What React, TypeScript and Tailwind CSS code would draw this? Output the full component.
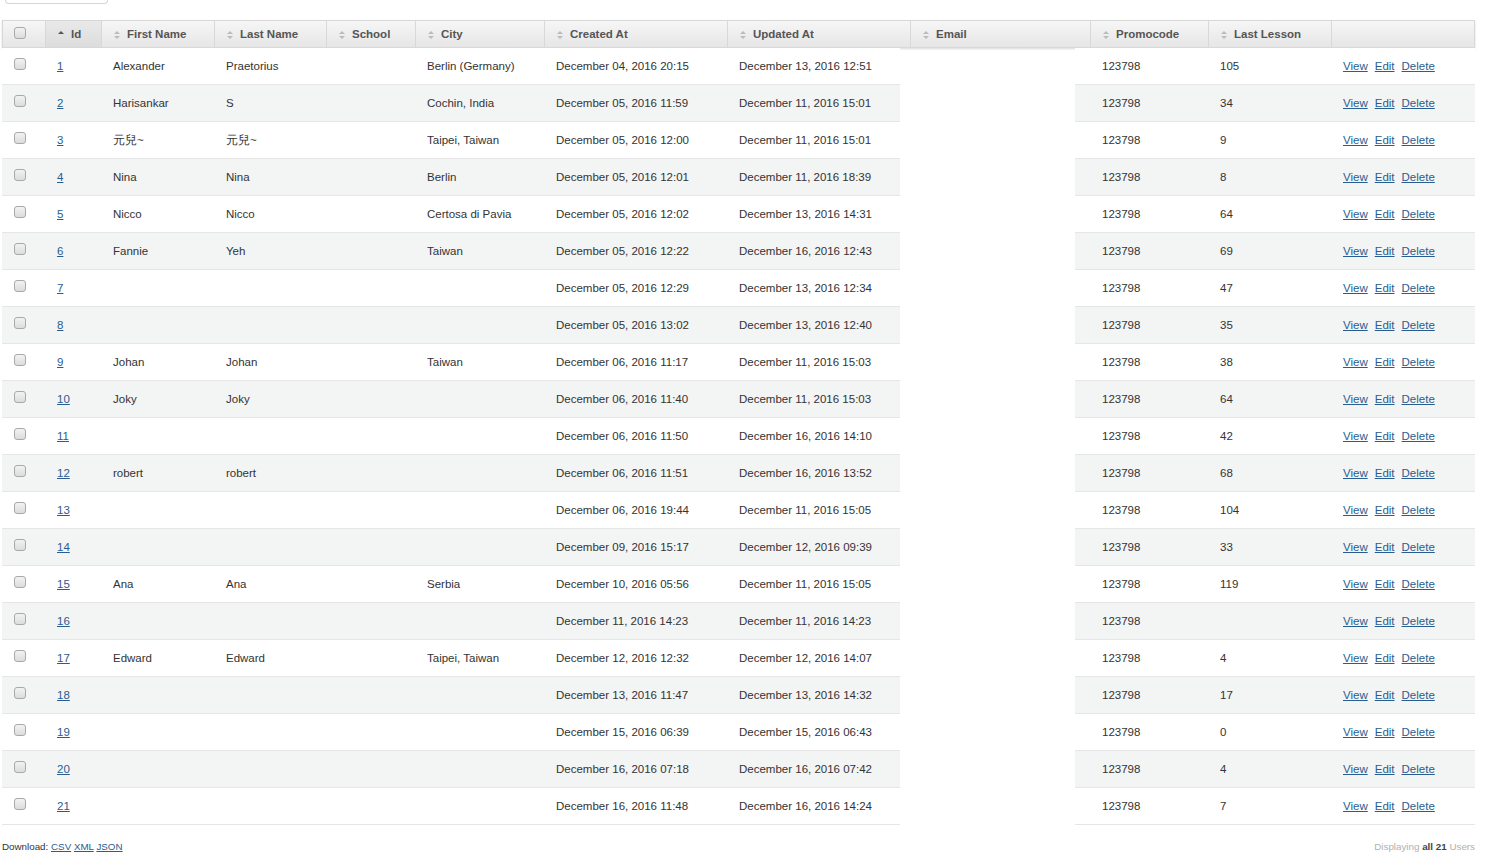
import React from "react";

type User = {
  id: number;
  first: string;
  last: string;
  city: string;
  created: string;
  updated: string;
  lesson: string;
};

const users: User[] = [
  { id: 1, first: "Alexander", last: "Praetorius", city: "Berlin (Germany)", created: "December 04, 2016 20:15", updated: "December 13, 2016 12:51", lesson: "105" },
  { id: 2, first: "Harisankar", last: "S", city: "Cochin, India", created: "December 05, 2016 11:59", updated: "December 11, 2016 15:01", lesson: "34" },
  { id: 3, first: "元兒~", last: "元兒~", city: "Taipei, Taiwan", created: "December 05, 2016 12:00", updated: "December 11, 2016 15:01", lesson: "9" },
  { id: 4, first: "Nina", last: "Nina", city: "Berlin", created: "December 05, 2016 12:01", updated: "December 11, 2016 18:39", lesson: "8" },
  { id: 5, first: "Nicco", last: "Nicco", city: "Certosa di Pavia", created: "December 05, 2016 12:02", updated: "December 13, 2016 14:31", lesson: "64" },
  { id: 6, first: "Fannie", last: "Yeh", city: "Taiwan", created: "December 05, 2016 12:22", updated: "December 16, 2016 12:43", lesson: "69" },
  { id: 7, first: "", last: "", city: "", created: "December 05, 2016 12:29", updated: "December 13, 2016 12:34", lesson: "47" },
  { id: 8, first: "", last: "", city: "", created: "December 05, 2016 13:02", updated: "December 13, 2016 12:40", lesson: "35" },
  { id: 9, first: "Johan", last: "Johan", city: "Taiwan", created: "December 06, 2016 11:17", updated: "December 11, 2016 15:03", lesson: "38" },
  { id: 10, first: "Joky", last: "Joky", city: "", created: "December 06, 2016 11:40", updated: "December 11, 2016 15:03", lesson: "64" },
  { id: 11, first: "", last: "", city: "", created: "December 06, 2016 11:50", updated: "December 16, 2016 14:10", lesson: "42" },
  { id: 12, first: "robert", last: "robert", city: "", created: "December 06, 2016 11:51", updated: "December 16, 2016 13:52", lesson: "68" },
  { id: 13, first: "", last: "", city: "", created: "December 06, 2016 19:44", updated: "December 11, 2016 15:05", lesson: "104" },
  { id: 14, first: "", last: "", city: "", created: "December 09, 2016 15:17", updated: "December 12, 2016 09:39", lesson: "33" },
  { id: 15, first: "Ana", last: "Ana", city: "Serbia", created: "December 10, 2016 05:56", updated: "December 11, 2016 15:05", lesson: "119" },
  { id: 16, first: "", last: "", city: "", created: "December 11, 2016 14:23", updated: "December 11, 2016 14:23", lesson: "" },
  { id: 17, first: "Edward", last: "Edward", city: "Taipei, Taiwan", created: "December 12, 2016 12:32", updated: "December 12, 2016 14:07", lesson: "4" },
  { id: 18, first: "", last: "", city: "", created: "December 13, 2016 11:47", updated: "December 13, 2016 14:32", lesson: "17" },
  { id: 19, first: "", last: "", city: "", created: "December 15, 2016 06:39", updated: "December 15, 2016 06:43", lesson: "0" },
  { id: 20, first: "", last: "", city: "", created: "December 16, 2016 07:18", updated: "December 16, 2016 07:42", lesson: "4" },
  { id: 21, first: "", last: "", city: "", created: "December 16, 2016 11:48", updated: "December 16, 2016 14:24", lesson: "7" },
];

const SortIcon = ({ active }: { active?: boolean }) => (
  <svg width="6" height="8" viewBox="0 0 6 8" className="shrink-0">
    <path d="M0 3 L3 0 L6 3 Z" fill={active ? "#555" : "#bbb"} />
    {!active && <path d="M0 5 L3 8 L6 5 Z" fill="#bbb" />}
  </svg>
);

const Checkbox = () => (
  <span className="block w-[12px] h-[12px] rounded-[3px] border border-[#a9a9a9] bg-gradient-to-b from-[#f2f2f2] to-[#dcdcdc]" />
);

const headers = [
  { label: "First Name", w: "w-[113px]" },
  { label: "Last Name", w: "w-[112px]" },
  { label: "School", w: "w-[89px]" },
  { label: "City", w: "w-[129px]" },
  { label: "Created At", w: "w-[183px]" },
  { label: "Updated At", w: "w-[183px]" },
  { label: "Email", w: "w-[180px]" },
  { label: "Promocode", w: "w-[118px]" },
  { label: "Last Lesson", w: "w-[123px]" },
];

const linkCls = "text-[#2a5d8f] underline";

export default function App() {
  return (
    <div className="w-[1487px] min-h-[864px] bg-white text-[#333] text-[11.5px] font-['Liberation_Sans',Arial,sans-serif]">
      <div className="ml-[5px] w-[103px] h-[4px] border border-t-0 border-[#d6d6d6] rounded-b-[8px]" />

      <div className="ml-[2px] w-[1473px] mt-[16px]">
        {/* header */}
        <div className="flex h-[28px] border border-[#d8d8d8] bg-gradient-to-b from-[#f6f6f6] to-[#e6e6e6] shadow-[0_1px_2px_rgba(0,0,0,0.15)] font-bold text-[11.5px] text-[#555]">
          <div className="w-[43px] flex items-center pl-[11px] pb-[2px] border-r border-[#d8d8d8]">
            <Checkbox />
          </div>
          <div className="w-[56px] flex items-center gap-[7px] pl-[12px] pt-[2px] border-r border-[#d8d8d8] bg-gradient-to-b from-[#e9e9e9] to-[#dcdcdc]">
            <SortIcon active />
            <span>Id</span>
          </div>
          {headers.map((h) => (
            <div key={h.label} className={`${h.w} flex items-center gap-[7px] pl-[12px] pt-[2px] border-r border-[#d8d8d8]`}>
              <SortIcon />
              <span>{h.label}</span>
            </div>
          ))}
          <div className="flex-1" />
        </div>

        {/* rows */}
        {users.map((u, i) => {
          const bg = i % 2 === 1 ? "bg-[#f3f4f4]" : "bg-white";
          return (
            <div key={u.id} className="flex h-[37px]">
              <div className={`flex ${bg} border-b border-[#e6e6e6] w-[898px] pt-[2px]`}>
                <div className="w-[43px] flex items-center pl-[12px] pb-[6px]">
                  <Checkbox />
                </div>
                <div className="w-[56px] flex items-center pl-[12px]">
                  <a className={linkCls}>{u.id}</a>
                </div>
                <div className="w-[113px] flex items-center pl-[12px]">{u.first}</div>
                <div className="w-[112px] flex items-center pl-[12px]">{u.last}</div>
                <div className="w-[89px]" />
                <div className="w-[129px] flex items-center pl-[12px]">{u.city}</div>
                <div className="w-[183px] flex items-center pl-[12px]">{u.created}</div>
                <div className="flex-1 flex items-center pl-[12px]">{u.updated}</div>
              </div>
              <div className="w-[175px]" />
              <div className={`flex flex-1 ${bg} border-b border-[#e6e6e6] pt-[2px]`}>
                <div className="w-[133px] flex items-center pl-[27px]">123798</div>
                <div className="w-[123px] flex items-center pl-[12px]">{u.lesson}</div>
                <div className="flex-1 flex items-center gap-[7px] pl-[12px]">
                  <a className={linkCls}>View</a>
                  <a className={linkCls}>Edit</a>
                  <a className={linkCls}>Delete</a>
                </div>
              </div>
            </div>
          );
        })}

        {/* footer */}
        <div className="flex items-center justify-between mt-[15px] text-[9.8px]">
          <div>
            Download: <a className={linkCls}>CSV</a> <a className={linkCls}>XML</a>{" "}
            <a className={linkCls}>JSON</a>
          </div>
          <div className="text-[#b0b0b0]">
            Displaying <b className="text-[#444]">all 21</b> Users
          </div>
        </div>
      </div>
    </div>
  );
}
